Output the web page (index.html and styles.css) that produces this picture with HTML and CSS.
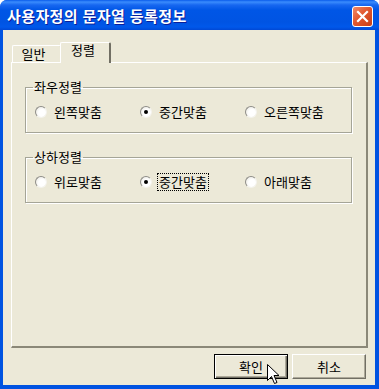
FILE: index.html
```html
<!DOCTYPE html>
<html lang="ko">
<head>
<meta charset="utf-8">
<link rel="stylesheet" href="styles.css">
</head>
<body>
<div class="window">
  <div class="titlebar">
    <span class="title">사용자정의 문자열 등록정보</span>
    <span class="close"><svg width="13" height="13" viewBox="0 0 13 13"><path d="M2 2 L11 11 M11 2 L2 11" stroke="#fff" stroke-width="2.2" stroke-linecap="square"/></svg></span>
  </div>
  <div class="client">
    <div class="tabs">
      <div class="tab">일반</div>
      <div class="tab active">정렬</div>
    </div>
    <div class="panel">
      <fieldset class="group">
        <legend>좌우정렬</legend>
        <div class="row">
          <label class="opt w1"><span class="radio"></span><span class="txt">왼쪽맞춤</span></label>
          <label class="opt w2"><span class="radio on"></span><span class="txt">중간맞춤</span></label>
          <label class="opt"><span class="radio"></span><span class="txt">오른쪽맞춤</span></label>
        </div>
      </fieldset>
      <fieldset class="group">
        <legend>상하정렬</legend>
        <div class="row">
          <label class="opt w1"><span class="radio"></span><span class="txt">위로맞춤</span></label>
          <label class="opt w2"><span class="radio on"></span><span class="txt focus">중간맞춤</span></label>
          <label class="opt"><span class="radio"></span><span class="txt">아래맞춤</span></label>
        </div>
      </fieldset>
    </div>
    <div class="buttons">
      <button class="btn default">확인</button>
      <button class="btn">취소</button>
    </div>
  </div>
  <svg class="cursor" width="13" height="21" viewBox="0 0 13 21"><path d="M0.5 0.5 L0.5 16.5 L4.5 12.5 L7.5 19.5 L10 18.5 L7 11.5 L12 11.5 Z" fill="#fff" stroke="#000" stroke-width="1"/></svg>
</div>
</body>
</html>
```
FILE: styles.css
```css
html, body { margin: 0; padding: 0; background: #fff; }
body { font-family: "Noto Sans CJK KR", "Noto Sans", sans-serif; font-size: 12px; color: #000; }
.window {
  position: relative;
  width: 379px; height: 389px;
  background: #0053E1;
  border-radius: 7px 7px 0 0;
  display: flex; flex-direction: column;
  overflow: hidden;
}
.titlebar {
  height: 30px; flex: none;
  display: flex; align-items: center; justify-content: space-between;
  padding: 0 6px 0 7px;
  background: linear-gradient(to bottom, #0A5CEB 0px, #3A8CFD 2px, #1767F0 5px, #0056E6 10px, #0054E3 22px, #0058EA 27px, #0048D5 30px);
}
.title {
  color: #fff; font-weight: bold; font-size: 15px; letter-spacing: 0.4px;
  text-shadow: 1px 1px 0 #0A1E9A;
  margin-top: 1px;
}
.close {
  width: 19px; height: 19px;
  border: 1px solid #fff; border-radius: 3px;
  background: linear-gradient(135deg, #F08A67 0%, #E0572F 45%, #C83E16 100%);
  display: flex; align-items: center; justify-content: center;
  margin-top: 2px;
}
.client {
  flex: 1;
  margin: 0 4px 4px 3px;
  background: #ECE9D8;
  padding: 12px 7px 0 8px;
  display: flex; flex-direction: column;
}
.tabs { display: flex; align-items: flex-end; height: 20px; padding-left: 1px; }
.tab {
  height: 16px; width: 47px;
  border-top: 1px solid #fff; border-left: 1px solid #fff; border-right: 1px solid #ACA899;
  border-radius: 2px 2px 0 0;
  box-sizing: content-box;
  line-height: 16px; padding-left: 0;
  text-align: center; text-indent: -6px;
  margin-right: -1px;
  font-size: 13px;
}
.tab.active {
  height: 20px; width: 48px; line-height: 14px;
  position: relative; z-index: 1;
  background: #ECE9D8;
  border-right: 2px solid #716F64;
  margin-bottom: -1px;
  text-indent: -4px;
}
.panel {
  height: 286px; box-sizing: border-box;
  border-top: 1px solid #fff; border-left: 1px solid #fff;
  border-right: 2px solid #8B8878; border-bottom: 2px solid #8B8878;
  padding: 17px 14px 0 13px;
  display: flex; flex-direction: column; gap: 17px;
}
.group {
  margin: 0; padding: 0 0 0 8px;
  border: 1px solid #A5A597;
  box-shadow: inset 1px 1px 0 #fff, 1px 1px 0 #fff;
  height: 53px; box-sizing: border-box;
}
.group legend { padding: 0 1px; margin-left: -1px; line-height: 14px; font-size: 13px; }
.row { display: flex; align-items: center; height: 36px; padding-bottom: 2px; }
.opt { display: flex; align-items: center; gap: 5px; font-size: 13px; }
.opt.w1 { width: 105px; }
.opt.w2 { width: 105px; }
.radio {
  width: 12px; height: 12px; box-sizing: border-box;
  border-radius: 50%;
  border: 1px solid; border-color: #8E8D88 #F4F3EE #F4F3EE #8E8D88;
  background: radial-gradient(circle at 60% 60%, #fff 40%, #E6E4DA 100%);
  display: flex; align-items: center; justify-content: center;
  margin-left: 1px;
}
.radio.on::after { content: ""; width: 4px; height: 4px; border-radius: 50%; background: #000; }
.txt { line-height: 14px; padding: 1px; border: 1px dotted transparent; }
.txt.focus { border-color: #000; }
.buttons { display: flex; justify-content: flex-end; gap: 4px; padding: 6px 2px 0 0; }
.btn {
  width: 74px; height: 25px;
  font: inherit; font-size: 13px; color: #000;
  background: #ECE9D8;
  border: 1px solid; border-color: #fff #716F64 #716F64 #fff;
  box-shadow: inset -1px -1px 0 #ACA899;
  padding: 0;
}
.btn.default { border: 1px solid #000; box-shadow: inset 1px 1px 0 #fff, inset -1px -1px 0 #716F64, inset -2px -2px 0 #ACA899; }
.cursor { position: absolute; left: 267px; top: 364px; }
```
